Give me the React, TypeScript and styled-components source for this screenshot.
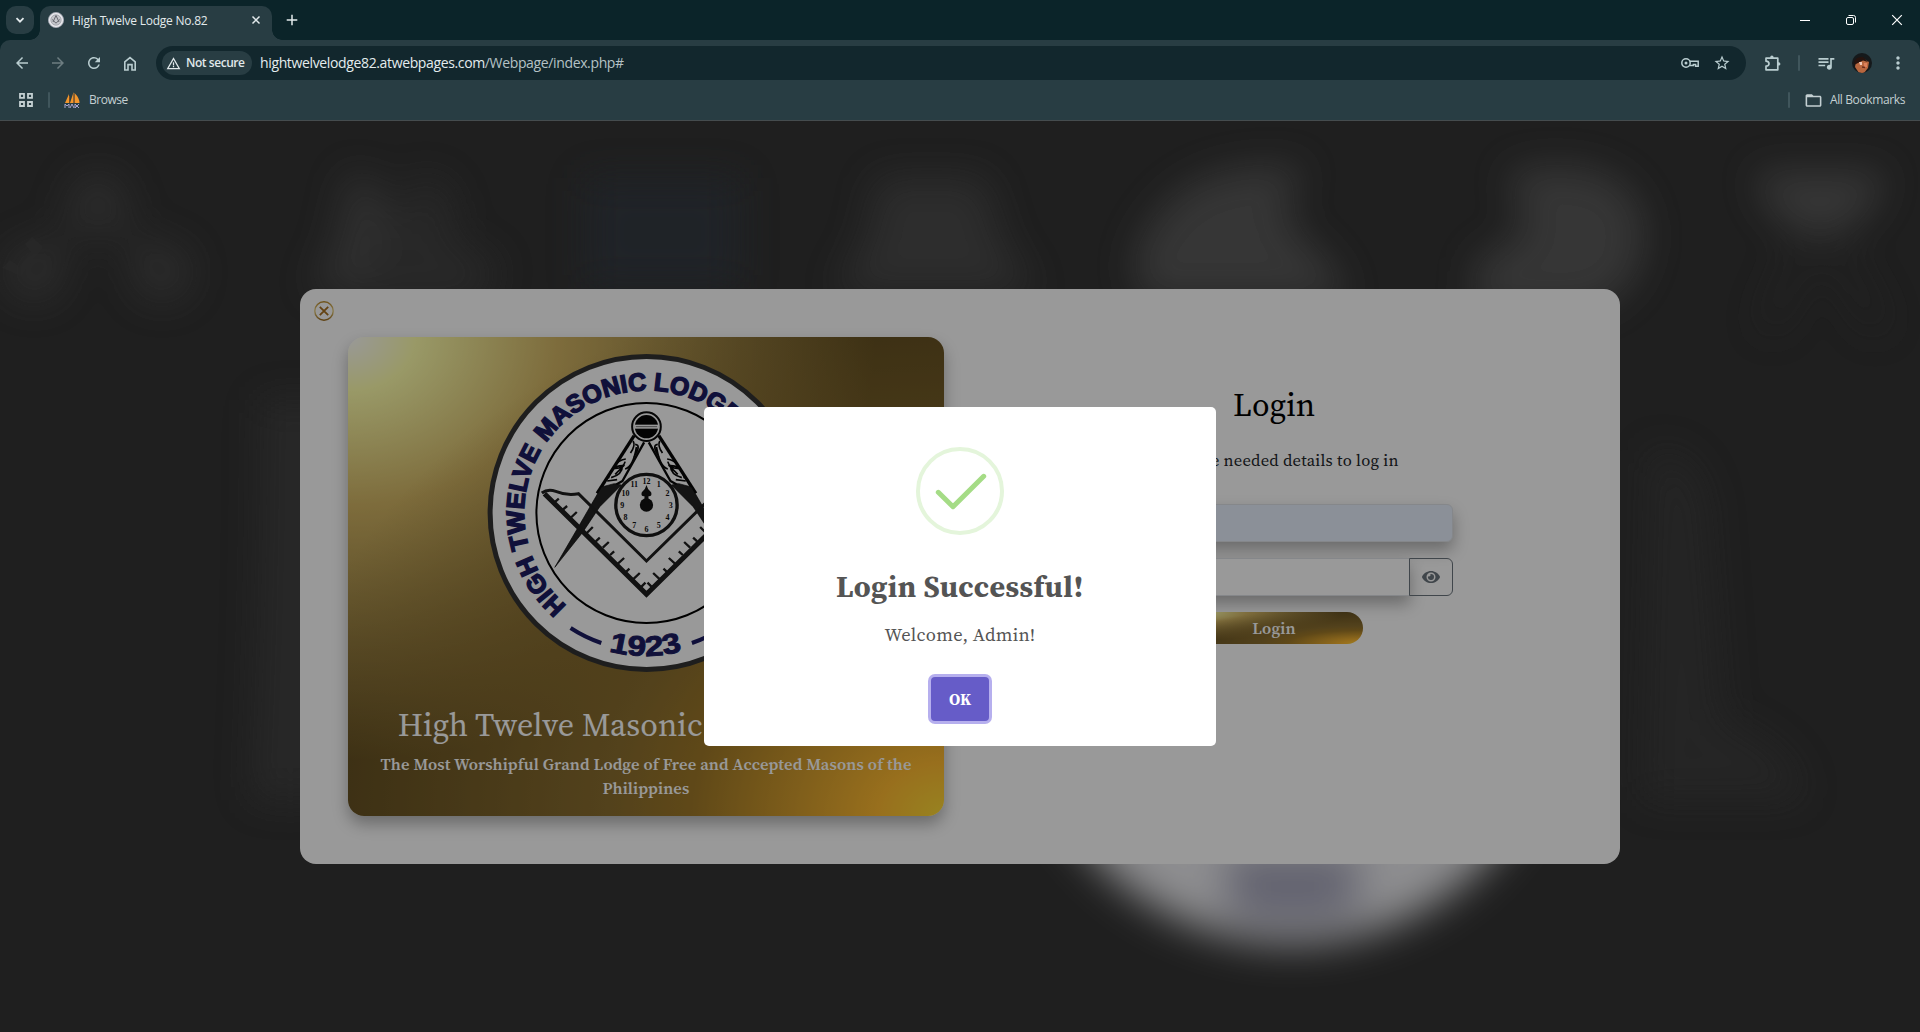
import React from "react";
import styled, { createGlobalStyle, css } from "styled-components";
import { MdArrowBack, MdArrowForward, MdRefresh, MdStarBorder, MdQueueMusic, MdMoreVert, MdWarningAmber, MdFolderOpen } from "react-icons/md";
import { FaEye } from "react-icons/fa";

const ui = `"Open Sans", "Noto Sans", sans-serif`;
const serif = `"Source Serif 4", "Liberation Serif", serif`;

const gold = css`
  background: radial-gradient(ellipse farthest-corner at right bottom, #fedb37 0%, #fdb931 8%, #9f7928 30%, #8a6e2f 40%, transparent 80%),
    radial-gradient(ellipse farthest-corner at left top, #ffffff 0%, #ffffac 8%, #d1b464 25%, #5d4a1f 62.5%, #5d4a1f 100%);
`;

const GlobalStyle = createGlobalStyle`
  * { box-sizing: border-box; }
  body { margin: 0; overflow: hidden; background: #1f1f1f; font-family: ${serif}; }
  h1, h2, p { margin: 0; }
  button { font: inherit; border: 0; padding: 0; background: none; color: inherit; }
  svg { display: block; flex: none; }
`;

const Window = styled.div`
  width: 1920px;
  height: 1032px;
  display: flex;
  flex-direction: column;
  overflow: hidden;
`;

/* ---------- browser frame ---------- */

const TabStrip = styled.div`
  height: 40px;
  flex: none;
  display: flex;
  align-items: flex-start;
  background: #0b2429;
  padding: 6px 7px 0 6px;
  color: #e3eaec;
`;

const TabSearch = styled.button`
  width: 28px;
  height: 28px;
  border-radius: 10px;
  background: #283d43;
  display: grid;
  place-items: center;
  margin-right: 6px;
`;

const Tab = styled.div`
  position: relative;
  width: 232px;
  height: 34px;
  padding: 0 11px 6px 8px;
  display: flex;
  align-items: center;
  border-radius: 10px 10px 0 0;
  background: #283d43;
  font: 12px/16px ${ui};
  &::before, &::after {
    content: "";
    position: absolute;
    bottom: 0;
    width: 10px;
    height: 10px;
  }
  &::before { left: -10px; background: radial-gradient(circle at 0 0, transparent 9.5px, #283d43 10px); }
  &::after { right: -10px; background: radial-gradient(circle at 100% 0, transparent 9.5px, #283d43 10px); }
`;

const TabTitle = styled.span`
  flex: 1;
  margin-left: 8px;
  padding-top: 1px;
  white-space: nowrap;
  letter-spacing: -0.23px;
`;

const NewTab = styled.button`
  width: 28px;
  height: 28px;
  margin-left: 6px;
  display: grid;
  place-items: center;
`;

const Caption = styled.div`
  margin-left: auto;
  display: flex;
  gap: 28px;
  padding-top: 5px;
  padding-right: 7px;
`;

const ToolbarWrap = styled.div`
  flex: none;
  height: 81px;
  background: linear-gradient(#0b2429 10px, #283d43 10px);
`;

const Chrome = styled.div`
  height: 81px;
  border-radius: 10px 10px 0 0;
  background: #283d43;
  border-bottom: 1px solid #454c4e;
  color: #c4d0d2;
`;

const Toolbar = styled.div`
  height: 46px;
  display: flex;
  align-items: center;
  padding-left: 4px;
`;

const IconSlot = styled.div<{ $w?: number; $dim?: boolean }>`
  width: ${(p) => p.$w ?? 36}px;
  display: grid;
  place-items: center;
  flex: none;
  color: ${(p) => (p.$dim ? "#6d7d81" : "#b9cdd0")};
`;

const Omnibox = styled.div`
  width: 1590px;
  height: 34px;
  margin-left: 8px;
  padding: 0 8px 0 6px;
  border-radius: 17px;
  background: #12272d;
  display: flex;
  align-items: center;
`;

const SecurityChip = styled.div`
  width: 90px;
  height: 24px;
  border-radius: 12px;
  padding-left: 4px;
  background: #283d43;
  display: flex;
  align-items: center;
  gap: 5px;
  color: #e0e8ea;
  font: 600 12px/24px ${ui};
  letter-spacing: -0.45px;
  white-space: nowrap;
`;

const Url = styled.div`
  margin-left: 8px;
  flex: 1;
  font: 14px/20px ${ui};
  letter-spacing: -0.36px;
  color: #e4ecee;
  span { color: #b5c2c5; }
`;

const Divider = styled.i<{ $m: string }>`
  width: 2px;
  height: 16px;
  margin: ${(p) => p.$m};
  background: #40565c;
  border-radius: 1px;
`;

const Bookmarks = styled.div`
  height: 28px;
  display: flex;
  align-items: center;
  padding: 0 15px 0 18px;
  font: 12px/16px ${ui};
`;

const BookmarkLabel = styled.span<{ $ls: number; $gap?: number }>`
  margin-left: ${(p) => p.$gap ?? 8}px;
  letter-spacing: ${(p) => p.$ls}px;
  white-space: nowrap;
`;

/* ---------- page ---------- */

const Page = styled.main`
  position: relative;
  flex: 1;
  overflow: hidden;
  background: #343434;
  display: grid;
  place-items: center;
`;

const Backdrop = styled.svg`
  position: absolute;
  inset: 0;
`;

const LoginModal = styled.section`
  position: relative;
  width: 1320px;
  height: 575px;
  padding: 48px;
  border-radius: 16px;
  background: #fff;
  display: grid;
  grid-template-columns: 596px 596px;
  column-gap: 32px;
`;

const CloseButton = styled.button`
  position: absolute;
  left: 14px;
  top: 12px;
`;

const Brand = styled.div`
  ${gold}
  height: 479px;
  border-radius: 16px;
  padding-top: 16px;
  box-shadow: 0 8px 16px rgba(0, 0, 0, 0.3);
  display: flex;
  flex-direction: column;
  align-items: center;
  color: #fff;
  text-align: center;
`;

const BrandTitle = styled.h1`
  margin: 33px 0 9px;
  font: 400 32px/38px ${serif};
  letter-spacing: 0.05px;
  white-space: nowrap;
`;

const BrandText = styled.p`
  font: 600 16.5px/24px ${serif};
  letter-spacing: 0.13px;
  width: 548px;
`;

const FormSide = styled.div`
  display: flex;
  flex-direction: column;
  align-items: center;
  padding-top: 49px;
`;

const FormTitle = styled.h2`
  font: 400 32px/38px ${serif};
  color: #000;
`;

const Hint = styled.p`
  margin: 25px 0 31px;
  font: 16.5px/24px ${serif};
  letter-spacing: 0.22px;
  color: #212529;
`;

const Field = styled.div<{ $filled?: boolean }>`
  width: ${(p) => (p.$filled ? 357 : 314)}px;
  height: 38px;
  border: 1px solid #dee2e6;
  border-radius: ${(p) => (p.$filled ? "6px" : "6px 0 0 6px")};
  background: ${(p) => (p.$filled ? "#e8f0fe" : "#fff")};
  box-shadow: 0 8px 16px rgba(0, 0, 0, 0.3);
`;

const FieldRow = styled.div`
  display: flex;
  margin: 16px 0;
`;

const EyeButton = styled.button`
  width: 44px;
  height: 38px;
  margin-left: -1px;
  border: 1px solid #6c757d;
  border-radius: 0 6px 6px 0;
  color: #6c757d;
  display: grid;
  place-items: center;
`;

const LoginButton = styled.button`
  ${gold}
  width: 178px;
  height: 32px;
  padding-top: 1px;
  border-radius: 16px;
  color: #fff;
  font: 600 16.5px/31px ${serif};
  letter-spacing: 0.15px;
`;

const Shade = styled.div`
  position: absolute;
  inset: 0;
  background: rgba(0, 0, 0, 0.4);
  display: grid;
  place-items: center;
`;

const Alert = styled.section`
  width: 512px;
  height: 339px;
  padding-top: 40px;
  border-radius: 5px;
  background: #fff;
  display: flex;
  flex-direction: column;
  align-items: center;
  color: #545454;
`;

const AlertTitle = styled.h2`
  margin-top: 33px;
  font: 700 30px/38px ${serif};
  letter-spacing: 0.4px;
`;

const AlertText = styled.p`
  margin-top: 17px;
  font: 18.5px/24px ${serif};
  letter-spacing: 0.25px;
`;

const OkButton = styled.button`
  width: 58px;
  height: 44px;
  margin-top: 30px;
  border-radius: 4px;
  background: #665cc8;
  box-shadow: 0 0 0 3px #b6afee;
  color: #fff;
  font: 700 16px/44px ${serif};
`;

/* ---------- drawings ---------- */

const Blurred = () => (
  <Backdrop width="1920" height="911" viewBox="0 121 1920 911">
    <defs>
      <filter id="soft" x="-20%" y="-20%" width="140%" height="140%"><feGaussianBlur stdDeviation="19" /></filter>
      <filter id="softer" x="-20%" y="-20%" width="140%" height="140%"><feGaussianBlur stdDeviation="20" /></filter>
    </defs>
    <g filter="url(#soft)">
      <path d="M98 200L40 268M98 200l58 68" stroke="#3e3e3e" strokeWidth="24" />
      <g fill="#4a4a4a">
        <circle cx="98" cy="202" r="29" /><circle cx="34" cy="272" r="29" /><circle cx="162" cy="272" r="29" />
      </g>
      <path d="M350 170l35 20 15 100h-90l25-45z" fill="#505050" />
      <path d="M420 175q45 10 30 60l50 30-20 40H350z" fill="#424242" />
      <path d="M585 178h155v110H585z" fill="#363b43" />
      <path d="M878 178h106l16 60 35 55H835l32-55z" fill="#4c4c4c" />
      <path d="M1306 168q-110-10-150 50-36 44-10 82h200q-10-40-50-66-20-30 10-66z" fill="#5a5a5a" />
      <path d="M1508 172q125-24 136 58 0 66-60 80h-110l2-50 50-26z" fill="#5a5a5a" />
      <path d="M1755 172h130q-15 60-65 60t-65-60z" fill="#5c5c5c" />
      <path d="M1808 240l-40 90M1830 240l50 90" stroke="#373737" strokeWidth="20" />
      <path d="M262 400h66v400h-76q10-200 10-400z" fill="#424242" />
      <path d="M1650 450q55 0 57 70l15 200q80 30 80 80h-160z" fill="#3d3d3d" />
    </g>
    <g filter="url(#softer)">
      <circle cx="1292" cy="674" r="270" fill="#ececf0" />
      <path d="M1225 850h135v62q-68 26-135 0z" fill="#a6a6bb" />
    </g>
    <path d="M2 268l8-8 9 7 12-15-6-8 7-7 11 10-22 29z" fill="#444" opacity=".6" />
  </Backdrop>
);

const numerals = ["12", "1", "2", "3", "4", "5", "6", "7", "8", "9", "10", "11"];

const CompassLeg = () => (
  <g stroke="#080808" strokeLinejoin="round">
    <path d="M1003 452L892 625" strokeWidth="10" fill="none" />
    <path d="M1033 472L968 588 940 604" strokeWidth="7" fill="none" />
    <path d="M905 606l38-10 22 4-65 65-50 75L765 847 835 727z" strokeWidth="2" fill="#222" />
    <path d="M1006 478q20 2-4 38m8-30q-10 60-34 66m-32-10q14-18 34-20m-40 28q32 4 38-20m-50 50q8-38 42-38 0 26-34 36m12-10l28-28m-52 48l30-4m48-116q8 14-8 36" strokeWidth="5" fill="none" />
  </g>
);

const ringWords = [
  { word: "HIGH", start: 0, length: 63 },
  { word: "TWELVE", start: 69.5, length: 102 },
  { word: "MASONIC", start: 179.5, length: 118 },
  { word: "LODGE", start: 304, length: 88 },
];

const Seal = () => (
  <svg width="320" height="320" viewBox="0 0 320 320">
    <defs>
      <path id="ringTop" d="M80.6 252.8A122.6 122.6 0 0 1 160.7 37.4A122.6 122.6 0 0 1 240.8 252.8" />
      <path id="ringYear" d="M49.5 251.4A143 143 0 0 0 269.5 251.4" />
    </defs>
    <circle cx="160.6" cy="160" r="156.5" fill="#fff" stroke="#333" strokeWidth="5" />
    <circle cx="160.4" cy="160" r="110" fill="none" stroke="#000" strokeWidth="2" />
    <g fill="#1b1b62" stroke="#1b1b62" strokeWidth="1.5" fontFamily="'Liberation Sans', Arial, sans-serif" fontWeight="700">
      {ringWords.map((w) => (
        <text key={w.word} fontSize="25">
          <textPath href="#ringTop" startOffset={w.start} textLength={w.length} lengthAdjust="spacingAndGlyphs">{w.word}</textPath>
        </text>
      ))}
      <text fontSize="28" strokeWidth="1" textAnchor="middle"><textPath href="#ringYear" startOffset="50%" textLength="74" lengthAdjust="spacingAndGlyphs">1923</textPath></text>
    </g>
    <path d="M84.6 275A137.8 137.8 0 0 0 115.3 290M236.6 275A137.8 137.8 0 0 1 205.9 290" stroke="#1b1b62" strokeWidth="4" fill="none" />
    <g transform="translate(-186.2 -68) scale(.33333)">
      <CompassLeg />
      <g transform="translate(2080 0) scale(-1 1)"><CompassLeg /></g>
      <path d="M734 626L1040 928l306-302" stroke="#1e1e1e" strokeWidth="15" fill="none" />
      <path d="M726 624q18-14 42-5 34 14 68 7L1040 828l204-200q34 7 68-7 24-9 42 3" stroke="#1e1e1e" strokeWidth="9" fill="none" />
      {[0, 1].map((side) => (
        <g key={side} transform={side ? "translate(2080 0) scale(-1 1)" : undefined} stroke="#1e1e1e" strokeWidth="7">
          <path d="M764 652l13-11M788 675l14-12M812 699l19-18M861 744l18-18M888 769l12-11M909 788l18-17M931 810l12-11M951 839l22-20M977 862l12-11M999 884l21-20M1022 908l15-15" />
        </g>
      ))}
      <circle cx="1040" cy="660" r="92" fill="#fff" stroke="#1a1a1a" strokeWidth="10" />
      {numerals.map((n, i) => {
        const a = (i * Math.PI) / 6;
        return (
          <text key={n} x={1040 + 73 * Math.sin(a)} y={668 - 72 * Math.cos(a)} fontSize="24" fontWeight="700" textAnchor="middle" fontFamily="'Liberation Serif', serif" fill="#111">{n}</text>
        );
      })}
      <circle cx="1040" cy="660" r="20" fill="#111" />
      <path d="M1040 600q3 14 14 22 4 13-8 12v20h-12v-20q-12 1-8-12 11-8 14-22z" fill="#111" />
      <circle cx="1040" cy="425" r="43" fill="#fff" stroke="#0a0a0a" strokeWidth="6" />
      <circle cx="1040" cy="425" r="35" fill="#050505" />
      <path d="M1004 425h72" stroke="#fff" strokeWidth="12" />
      <path d="M1008 425h64" stroke="#777" strokeWidth="3" />
    </g>
  </svg>
);

const Favicon = () => (
  <svg width="16" height="16" viewBox="0 0 16 16">
    <circle cx="8" cy="8" r="7.6" fill="#e6e6ea" stroke="#a7abb6" strokeWidth=".8" />
    <circle cx="8" cy="8" r="5.2" fill="#c5c6cb" stroke="#8d9099" strokeWidth=".6" />
    <path d="M8 3.5L5 10M8 3.5L11 10M4.2 7.5L8 11.2l3.8-3.7" stroke="#66686f" fill="none" />
  </svg>
);

const Sails = () => (
  <svg width="17" height="17" viewBox="0 0 17 17">
    <path d="M5 2v9H1zM9.6 0v11H6zM10.5 1q5 5 5 10h-5z" fill="#f3962c" />
    <path d="M5.5 4v7M10 2v9" stroke="#7b4d22" strokeWidth=".8" />
    <path d="M1 16v-4l2 2 2-2v4M6 16l2-4 2 4M11 16v-4l4 4m0-4l-4 4" stroke="#a9a4cd" fill="none" />
  </svg>
);

const Avatar = () => (
  <svg width="20" height="20" viewBox="0 0 20 20">
    <clipPath id="face"><circle cx="10" cy="10" r="10" /></clipPath>
    <g clipPath="url(#face)">
      <path d="M0 0h20v20H0z" fill="#15191b" />
      <path d="M4 8q3-2 6-2t7 3l-1 6-4 5H7l-4-6z" fill="#b8673f" />
      <path d="M2 10q1-7 9-6l5 5-5-1.5-4 2-4 2z" fill="#26130e" />
      <path d="M7 9h3v3H8z" fill="#f0c9b8" /><path d="M12 10h3v4h-3z" fill="#dd805a" />
      <path d="M10 14l3 .5" stroke="#6b2b1b" strokeWidth="1.5" fill="none" />
    </g>
  </svg>
);

const line = { fill: "none", stroke: "currentColor" };

const BrowserFrame = () => (
  <>
    <TabStrip>
      <TabSearch><svg width="10" height="10" viewBox="0 0 10 10" {...line} strokeWidth="1.8"><path d="M1.5 3.2L5 6.7l3.5-3.5" /></svg></TabSearch>
      <Tab>
        <Favicon />
        <TabTitle>High Twelve Lodge No.82</TabTitle>
        <svg width="10" height="10" viewBox="0 0 10 10" {...line} strokeWidth="1.5"><path d="M1.5 1.5l7 7m0-7l-7 7" /></svg>
      </Tab>
      <NewTab><svg width="12" height="12" viewBox="0 0 12 12" {...line} strokeWidth="1.5"><path d="M6 .7v10.6M.7 6h10.6" /></svg></NewTab>
      <Caption>
        <svg width="18" height="18" viewBox="0 0 18 18" {...line}><path d="M4 9.5h10" stroke="#fff" /></svg>
        <svg width="18" height="18" viewBox="0 0 18 18" {...line} stroke="#fff"><rect x="4.5" y="6.5" width="7" height="7" rx="1.5" /><path d="M6.5 4.5h5q2 0 2 2v5" /></svg>
        <svg width="18" height="18" viewBox="0 0 18 18" {...line} stroke="#fff" strokeWidth="1.2"><path d="M4.2 4.2l9.6 9.6m0-9.6l-9.6 9.6" /></svg>
      </Caption>
    </TabStrip>
    <ToolbarWrap>
      <Chrome>
        <Toolbar>
          <IconSlot><MdArrowBack size={18} /></IconSlot>
          <IconSlot $dim><MdArrowForward size={18} /></IconSlot>
          <IconSlot><MdRefresh size={18} /></IconSlot>
          <IconSlot><svg width="14" height="15" viewBox="0 0 14 15" {...line} strokeWidth="1.6"><path d="M1.8 14V5.8L7 1.6l5.2 4.2V14H9V8.6H5V14z" /></svg></IconSlot>
          <Omnibox>
            <SecurityChip><MdWarningAmber size={15} />Not secure</SecurityChip>
            <Url>hightwelvelodge82.atwebpages.com<span>/Webpage/index.php#</span></Url>
            <IconSlot $w={32}>
              <svg width="18" height="12" viewBox="0 0 18 12" {...line} strokeWidth="1.5"><circle cx="5" cy="6" r="4.2" /><circle cx="5" cy="6" r="1.5" fill="currentColor" stroke="none" /><path d="M9 4.2h8.2v5h-2.6V7.6h-2.2v1H9" /></svg>
            </IconSlot>
            <IconSlot $w={32}><MdStarBorder size={18} /></IconSlot>
          </Omnibox>
          <IconSlot $w={54}>
            <svg width="18" height="18" viewBox="0 0 18 18" {...line} strokeWidth="1.7" strokeLinejoin="round"><path d="M2 4.2h11.8v11.6H2v-3.6q3-.3 3-2.5T2 7.2z" /><path d="M6.2 4V3.2a1.7 1.7 0 013.4 0V4M14 8.3h.8a1.6 1.6 0 010 3.2H14" fill="currentColor" stroke="none" /></svg>
          </IconSlot>
          <Divider $m="0 16px 0 -2px" />
          <IconSlot $w={20}><MdQueueMusic size={20} /></IconSlot>
          <IconSlot $w={52}><Avatar /></IconSlot>
          <IconSlot $w={16}><MdMoreVert size={20} /></IconSlot>
        </Toolbar>
        <Bookmarks>
          <svg width="16" height="16" viewBox="0 0 16 16" {...line} strokeWidth="1.8"><path d="M2 1.9h4v4H2zM10 1.9h4v4h-4zM2 10h4v4H2zM10 10h4v4h-4z" /></svg>
          <Divider $m="0 14px" />
          <Sails />
          <BookmarkLabel $ls={-0.5}>Browse</BookmarkLabel>
          <Divider $m="0 14px 0 auto" />
          <MdFolderOpen size={19} />
          <BookmarkLabel $ls={-0.38} $gap={7}>All Bookmarks</BookmarkLabel>
        </Bookmarks>
      </Chrome>
    </ToolbarWrap>
  </>
);

export default function App() {
  return (
    <Window>
      <GlobalStyle />
      <BrowserFrame />
      <Page>
        <Blurred />
        <LoginModal>
          <CloseButton aria-label="Close">
            <svg width="20" height="20" viewBox="0 0 20 20" fill="none">
              <defs>
                <linearGradient id="rim" x1="0" y1="0" x2="0" y2="1"><stop offset="0" stopColor="#b98a2c" /><stop offset=".5" stopColor="#e6cf80" /><stop offset="1" stopColor="#9f6f20" /></linearGradient>
              </defs>
              <circle cx="10" cy="10" r="9.2" stroke="url(#rim)" strokeWidth="1.4" />
              <path d="M5.8 5.8l8.4 8.4m0-8.4l-8.4 8.4" stroke="#a8701f" strokeWidth="1.8" />
            </svg>
          </CloseButton>
          <Brand>
            <Seal />
            <BrandTitle>High Twelve Masonic Lodge No. 82</BrandTitle>
            <BrandText>The Most Worshipful Grand Lodge of Free and Accepted Masons of the Philippines</BrandText>
          </Brand>
          <FormSide>
            <FormTitle>Login</FormTitle>
            <Hint>Enter the needed details to log in</Hint>
            <Field $filled />
            <FieldRow>
              <Field />
              <EyeButton aria-label="Show password"><FaEye size={18} /></EyeButton>
            </FieldRow>
            <LoginButton>Login</LoginButton>
          </FormSide>
        </LoginModal>
        <Shade>
          <Alert>
            <svg width="88" height="88" viewBox="0 0 88 88" fill="none">
              <circle cx="44" cy="44" r="42" stroke="#e4f5db" strokeWidth="4" />
              <path d="M22.3 45.3L37 59.7 67.7 29.3" stroke="#a5dc86" strokeWidth="5" strokeLinecap="round" strokeLinejoin="round" />
            </svg>
            <AlertTitle>Login Successful!</AlertTitle>
            <AlertText>Welcome, Admin!</AlertText>
            <OkButton>OK</OkButton>
          </Alert>
        </Shade>
      </Page>
    </Window>
  );
}
